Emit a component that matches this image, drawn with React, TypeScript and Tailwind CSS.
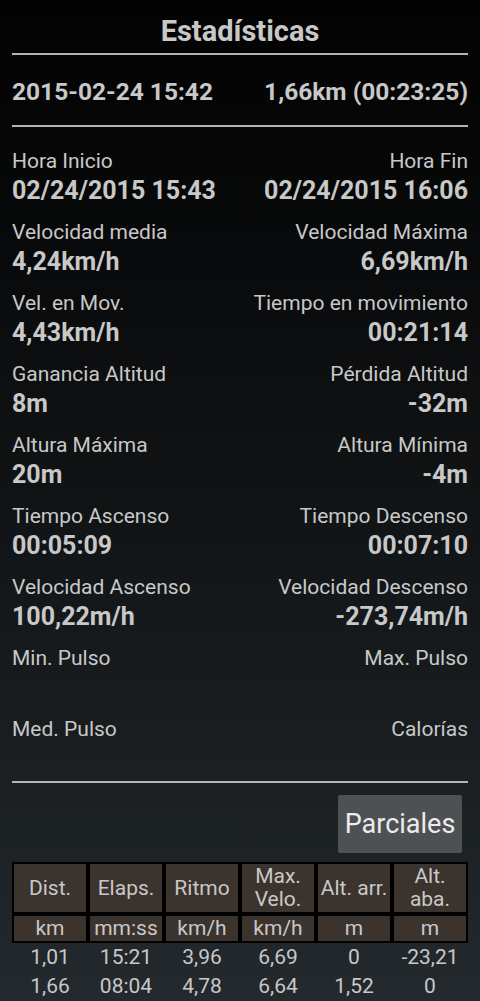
const stats = [
  ["Hora Inicio", "02/24/2015 15:43", "Hora Fin", "02/24/2015 16:06"],
  ["Velocidad media", "4,24km/h", "Velocidad Máxima", "6,69km/h"],
  ["Vel. en Mov.", "4,43km/h", "Tiempo en movimiento", "00:21:14"],
  ["Ganancia Altitud", "8m", "Pérdida Altitud", "-32m"],
  ["Altura Máxima", "20m", "Altura Mínima", "-4m"],
  ["Tiempo Ascenso", "00:05:09", "Tiempo Descenso", "00:07:10"],
  ["Velocidad Ascenso", "100,22m/h", "Velocidad Descenso", "-273,74m/h"],
  ["Min. Pulso", "", "Max. Pulso", ""],
  ["Med. Pulso", "", "Calorías", ""],
];

const headers = ["Dist.", "Elaps.", "Ritmo", "Max. Velo.", "Alt. arr.", "Alt. aba."];
const units = ["km", "mm:ss", "km/h", "km/h", "m", "m"];
const splits = [
  ["1,01", "15:21", "3,96", "6,69", "0", "-23,21"],
  ["1,66", "08:04", "4,78", "6,64", "1,52", "0"],
];

export default function App() {
  return (
    <div
      className="w-[480px] h-[1001px] overflow-hidden bg-gradient-to-b from-[#030303] to-[#23292d] px-[12px] text-[#c8c8c8]"
      style={{ fontFamily: "Roboto, 'Liberation Sans', sans-serif" }}
    >
      <div className="pt-[14px] text-center text-[29px] leading-[34px] font-bold">Estadísticas</div>
      <div className="mt-[5px] h-[2px] bg-[#b4b4b4]" />

      <div className="h-[70px] pt-[4px] flex items-center justify-between text-[24.5px] font-bold">
        <span>2015-02-24 15:42</span>
        <span>1,66km (00:23:25)</span>
      </div>
      <div className="h-[2px] bg-[#b4b4b4]" />

      <div className="mt-[21px]">
        {stats.map((s, i) => (
          <div key={i} className={i < stats.length - 1 ? "flex justify-between mb-[11px]" : "flex justify-between"}>
            <div>
              <div className="text-[21px] leading-[26px]">{s[0]}</div>
              <div className="h-[34px] text-[25px] leading-[34px] font-bold">{s[1]}</div>
            </div>
            <div className="text-right">
              <div className="text-[21px] leading-[26px]">{s[2]}</div>
              <div className="h-[34px] text-[25px] leading-[34px] font-bold">{s[3]}</div>
            </div>
          </div>
        ))}
      </div>
      <div className="mt-[5px] h-[2px] bg-[#b4b4b4]" />

      <div className="flex justify-end pr-[6px] pt-[12px]">
        <button className="w-[124px] h-[58px] bg-[#4e5154] rounded-[2px] text-[27px] text-[#ececec]">
          Parciales
        </button>
      </div>

      <div className="mt-[9px] bg-black p-[2px] grid grid-cols-6 gap-x-[4px] gap-y-[4px]">
        {headers.map((h) => (
          <div
            key={h}
            className="h-[48px] bg-[#3b332e] flex items-center justify-center text-center text-[21px] leading-[23px]"
          >
            {h}
          </div>
        ))}
        {units.map((u, i) => (
          <div key={i} className="h-[25px] bg-[#3b332e] flex items-center justify-center text-[21px]">
            {u}
          </div>
        ))}
      </div>

      <div className="px-[2px] grid grid-cols-6 gap-x-[4px]">
        {splits.flat().map((v, i) => (
          <div key={i} className="h-[29px] flex items-center justify-center text-[21px]">
            {v}
          </div>
        ))}
      </div>
    </div>
  );
}
